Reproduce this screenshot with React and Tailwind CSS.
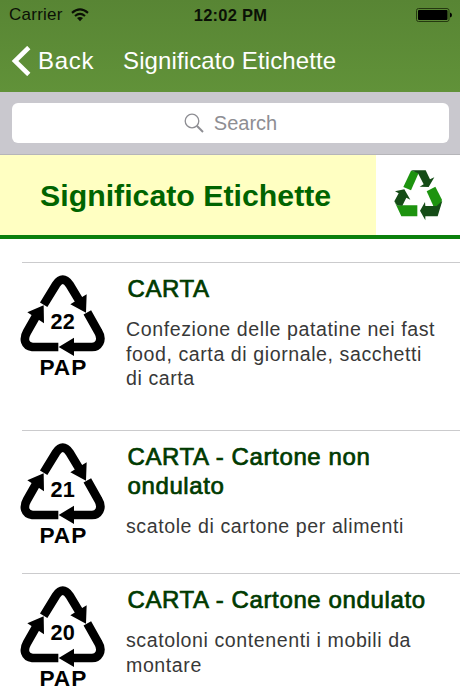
const items = [
  {
    code: '22',
    title: 'CARTA',
    lines: ['Confezione delle patatine nei fast', 'food, carta di giornale, sacchetti', 'di carta'],
    height: 'h-[168px]',
  },
  {
    code: '21',
    title: 'CARTA - Cartone non ondulato',
    lines: ['scatole di cartone per alimenti'],
    height: 'h-[143px]',
  },
  {
    code: '20',
    title: 'CARTA - Cartone ondulato',
    lines: ['scatoloni contenenti i mobili da', 'montare'],
    height: 'h-[168px]',
  },
];

function PapIcon({ code }) {
  return (
    <svg viewBox="30 40 255 330" className="block h-[110px] w-[85px] shrink-0">
      <g fill="none" stroke="#000" strokeWidth="26">
        <path d="M101 132 L138 72 Q158 42 179 72 L208 120" />
        <path d="M232 155 L264 212 C281 240 264 259 246 259 L185 259" />
        <path d="M145 259 L67 259 C44 256 39 235 51 214 L80 163" />
      </g>
      <path d="M228 156 L230 101 L181 131Z M146 259 L192 231 L192 286Z M101 134 L52 155 L102 188Z" />
      <text
        x="158"
        y="205"
        textAnchor="middle"
        className="font-['Liberation_Sans',Arial,sans-serif] text-[65px] font-bold"
      >
        {code}
      </text>
      <text
        x="160"
        y="342"
        textAnchor="middle"
        className="font-['Liberation_Sans',Arial,sans-serif] text-[68px] font-bold tracking-[3px]"
      >
        PAP
      </text>
    </svg>
  );
}

function RecycleLogo() {
  return (
    <svg viewBox="494 239 147 153" className="h-[51px] w-[49px]">
      <g fill="#1d930f">
        <path d="M522 290 L545 241 L569 246 L545 300Z" />
        <path d="M592 303 L618 289 L638 328 L633 348 L612 347Z" />
        <path d="M495 333 L503 345 L564 345 L564 378 L516 378Z" />
      </g>
      <g fill="#154c17">
        <path d="M545 240 L589 240 L602 267 L615 261 L598 290 L571 289 L583 282 L566 249Z" />
        <path d="M639 331 L625 378 L588 378 L588 390 L572 361 L587 335 L588 347 L622 347Z" />
        <path d="M495 333 L508 309 L497 303 L525 297 L543 328 L531 322 L519 346 L503 345Z" />
      </g>
    </svg>
  );
}

export default function App() {
  return (
    <div className="flex h-[690px] w-[460px] flex-col overflow-hidden bg-white font-['Liberation_Sans',Arial,sans-serif]">
      <header className="h-[92px] shrink-0 bg-linear-to-b from-[#588534] to-[#619239]">
        <div className="grid h-[30px] grid-cols-3 items-center pl-[9px] pr-2 text-[17px] text-[#0b1006]">
          <div className="flex items-center gap-2">
            <span className="tracking-[0.25px]">Carrier</span>
            <svg viewBox="0 0 18 14" className="h-[14px] w-[18px]" fill="none" stroke="#0b1006" strokeWidth="2.1">
              <path d="M1 4.9 Q9 -2 17 4.9 M4 8 Q9 3.7 14 8" />
              <path d="M9 13.3 L6 10.1 Q9 7.7 12 10.1Z" fill="#0b1006" stroke="none" />
            </svg>
          </div>
          <span className="whitespace-nowrap text-center text-[16.5px] font-bold tracking-[0.25px]">12:02 PM</span>
          <svg viewBox="0 0 36 14" className="h-[14px] w-9 justify-self-end">
            <rect x="0.5" y="0.5" width="32.5" height="13" rx="2" fill="none" stroke="#24380f" />
            <rect x="2" y="2" width="29.5" height="10" rx="1" />
            <path d="M34 4.5 Q36 5 36 7 Q36 9 34 9.5Z" />
          </svg>
        </div>
        <div className="flex h-[62px] items-center text-2xl text-white">
          <svg viewBox="0 0 20 30" className="ml-[11px] h-[30px] w-5" fill="none" stroke="#fff" strokeWidth="4.6">
            <path d="M17.8 1.5 L4 15 L17.8 28.5" />
          </svg>
          <span className="ml-[7px] w-[85px] tracking-[0.7px]">Back</span>
          <h1 className="whitespace-nowrap tracking-[0.12px]">Significato Etichette</h1>
        </div>
      </header>

      <div className="flex h-[63px] shrink-0 items-center border-b border-[#b5b5b9] bg-[#c9c8ce] pl-3 pr-[11px]">
        <div className="flex h-10 w-full items-center justify-center gap-[10px] rounded-md bg-white text-[20px] text-[#8e8e93]">
          <svg viewBox="0 0 20 20" className="h-5 w-5" fill="none" stroke="#8e8e93">
            <circle cx="8" cy="8" r="6.8" strokeWidth="1.3" />
            <path d="M12.8 12.8 L19 19" strokeWidth="2" />
          </svg>
          <span>Search</span>
        </div>
      </div>

      <section className="flex h-[84px] shrink-0 border-b-4 border-[#0a800d]">
        <div className="flex w-[376px] items-center bg-[#ffffc2] pl-10 pt-[2px]">
          <h2 className="whitespace-nowrap text-[30.3px] font-bold text-[#006400]">Significato Etichette</h2>
        </div>
        <div className="flex flex-1 items-center justify-center pl-[1px]">
          <RecycleLogo />
        </div>
      </section>

      <ul className="mt-[23px] pl-[22px]">
        {items.map((item) => (
          <li key={item.code} className={`flex border-t border-[#cbcbcd] ${item.height}`}>
            <div className="-ml-[2px] w-[106px] shrink-0 pt-[11px]">
              <PapIcon code={item.code} />
            </div>
            <div className="pt-[11px]">
              <h3 className="ml-[1.5px] w-[310px] text-2xl leading-[29px] tracking-[0.62px] text-[#003a00] [-webkit-text-stroke:0.7px_#003a00]">
                {item.title}
              </h3>
              <div className="mt-[14px] text-[19.6px] leading-[24.5px] tracking-[0.57px] text-[#383838]">
                {item.lines.map((line) => (
                  <p key={line} className="whitespace-nowrap">
                    {line}
                  </p>
                ))}
              </div>
            </div>
          </li>
        ))}
      </ul>
    </div>
  );
}
